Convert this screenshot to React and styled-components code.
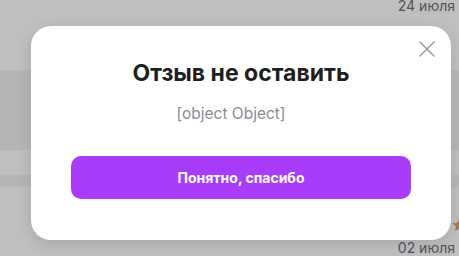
import React from 'react';
import styled, {createGlobalStyle} from 'styled-components';

const GlobalStyle = createGlobalStyle`
  html, body {
    margin: 0;
    padding: 0;
    width: 459px;
    height: 256px;
    overflow: hidden;
    font-family: Inter, "Noto Sans", sans-serif;
  }
`;

const Page = styled.div`
  position: relative;
  width: 459px;
  height: 256px;
  background: #ffffff;
  display: flex;
  flex-direction: column;
`;

const Row = styled.div`
  height: ${p => p.h}px;
  background: ${p => p.tint ? '#f3f3f7' : '#ffffff'};
  display: flex;
  flex-direction: column;
  align-items: flex-end;
  justify-content: ${p => p.bottom ? 'flex-end' : 'flex-start'};
  padding-right: 4px;
  box-sizing: border-box;
  position: relative;
`;

const DateText = styled.span`
  font-family: Inter, sans-serif;
  font-size: 14px;
  line-height: 16px;
  color: #6f6f78;
  margin-top: ${p => p.top || 0}px;
`;

const Star = styled.svg`
  position: absolute;
  right: -8px;
  top: 30px;
`;

const Overlay = styled.div`
  position: absolute;
  inset: 0;
  background: rgba(0, 0, 0, 0.25);
  display: flex;
  align-items: flex-start;
  padding: 26px 0 0 31px;
  box-sizing: border-box;
`;

const Modal = styled.div`
  position: relative;
  width: 420px;
  height: 214px;
  background: #ffffff;
  border-radius: 20px;
  box-shadow: 0 4px 16px rgba(0, 0, 0, 0.12);
  padding: 33px 40px 0;
  box-sizing: border-box;
  display: flex;
  flex-direction: column;
  align-items: center;
`;

const Close = styled.button`
  position: absolute;
  top: 15px;
  right: 16px;
  width: 16px;
  height: 16px;
  padding: 0;
  border: none;
  background: none;
  display: flex;
  cursor: pointer;
`;

const Title = styled.h2`
  margin: 0;
  font-size: 23px;
  line-height: 28px;
  font-weight: 700;
  color: #1f1f22;
`;

const Message = styled.p`
  margin: 17px 20px 0 0;
  font-size: 15.5px;
  line-height: 20px;
  color: #8b8b97;
`;

const Button = styled.button`
  margin-top: 32px;
  width: 100%;
  height: 43px;
  flex-shrink: 0;
  border: none;
  border-radius: 10px;
  background: #a93cf8;
  color: #ffffff;
  font-family: Inter, sans-serif;
  font-size: 14px;
  font-weight: 700;
  cursor: pointer;
`;

const App = () => (
    <>
        <GlobalStyle/>
        <Page>
            <Row h={70}>
                <DateText top={-2}>24 июля</DateText>
            </Row>
            <Row h={80} tint/>
            <Row h={25}/>
            <Row h={12} tint/>
            <Row h={69} bottom>
                <Star width="16" height="16" viewBox="0 0 24 24">
                    <path d="M12 2l2.9 6.9 7.1.6-5.4 4.7 1.6 7-6.2-3.8-6.2 3.8 1.6-7L2 9.5l7.1-.6z" fill="#e8a15a"/>
                </Star>
                <DateText>02 июля</DateText>
            </Row>
            <Overlay>
                <Modal>
                    <Close aria-label="Закрыть">
                        <svg width="16" height="16" viewBox="0 0 16 16">
                            <path d="M1 1l14 14M15 1L1 15" stroke="#9a9aa2" strokeWidth="1.5" strokeLinecap="round"/>
                        </svg>
                    </Close>
                    <Title>Отзыв не оставить</Title>
                    <Message>[object Object]</Message>
                    <Button>Понятно, спасибо</Button>
                </Modal>
            </Overlay>
        </Page>
    </>
);

export default App;
